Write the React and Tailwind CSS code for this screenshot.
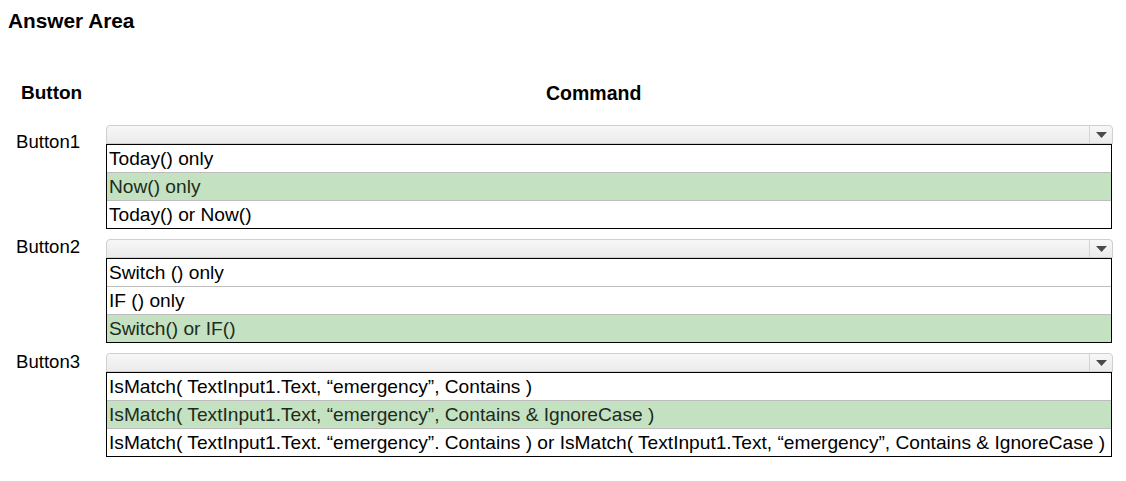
import React from 'react';

const groups = [
  {
    label: 'Button1',
    labelPad: 'pt-[6px]',
    options: ['Today() only', 'Now() only', 'Today() or Now()'],
    answer: 1,
  },
  {
    label: 'Button2',
    labelPad: '-mt-[3px]',
    options: ['Switch () only', 'IF () only', 'Switch() or IF()'],
    answer: 2,
  },
  {
    label: 'Button3',
    labelPad: '-mt-[2px]',
    options: [
      'IsMatch( TextInput1.Text, “emergency”, Contains )',
      'IsMatch( TextInput1.Text, “emergency”, Contains & IgnoreCase )',
      'IsMatch( TextInput1.Text. “emergency”. Contains ) or IsMatch( TextInput1.Text, “emergency”, Contains & IgnoreCase )',
    ],
    answer: 1,
  },
];

const Dropdown = ({ options, answer }) => (
  <div className="w-[1007px]">
    <div className="flex h-[19px] rounded-t-[4px] border border-[#cfcfcf] bg-gradient-to-b from-[#f7f7f7] to-[#ebebeb]">
      <div className="flex-1" />
      <div className="flex w-[23px] items-center justify-center border-l border-[#d4d4d4]">
        <svg width="11" height="6" viewBox="0 0 11 6">
          <path d="M0 0 H11 L5.5 6 Z" fill="#4a4a4a" />
        </svg>
      </div>
    </div>
    <div className="mr-px border border-black bg-white">
      {options.map((opt, i) => (
        <div
          key={i}
          className={
            'pl-[2px] text-[19.15px] leading-[27px] whitespace-nowrap ' +
            (i > 0 ? 'h-[28px] border-t border-[#bdbdbd] ' : 'h-[27px] ') +
            (i === answer ? 'bg-[#c4e1c2] text-[#1d2b1c]' : 'text-black')
          }
        >
          {opt}
        </div>
      ))}
    </div>
  </div>
);

export default function App() {
  return (
    <div className="h-[481px] w-[1126px] bg-white font-['Liberation_Sans',Arial,sans-serif] text-black">
      <div className="pl-[8px] pt-[9px] text-[20.8px] font-bold leading-[23px]">Answer Area</div>
      <div className="mt-[50px] flex font-bold leading-[22px]">
        <div className="w-[106px] pl-[21px] text-[19px]">Button</div>
        <div className="pl-[440px] text-[19.5px]">Command</div>
      </div>
      <div className="mt-[21px] flex flex-col gap-[10px]">
        {groups.map((g) => (
          <div key={g.label} className="flex">
            <div className={'w-[106px] pl-[16px] text-[18.6px] leading-[21px] ' + g.labelPad}>{g.label}</div>
            <Dropdown options={g.options} answer={g.answer} />
          </div>
        ))}
      </div>
    </div>
  );
}
